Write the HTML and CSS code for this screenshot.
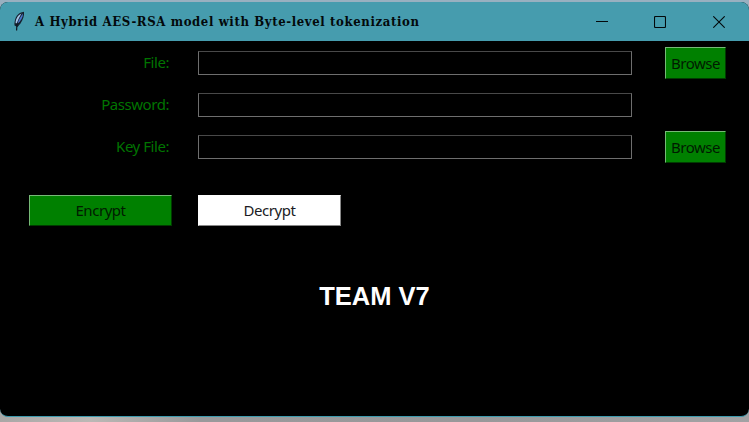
FILE: index.html
```html
<!DOCTYPE html>
<html lang="en">
<head>
<meta charset="utf-8">
<title>A Hybrid AES-RSA model with Byte-level tokenization</title>
<link rel="stylesheet" href="styles.css">
</head>
<body>
<main class="window">
  <header class="titlebar">
    <svg class="feather" width="14" height="22" viewBox="0 0 14 22">
      <path d="M1.500 14.500C1 9 3.500 3 8 1.500L11 .8C11.500 4 10 9 7.500 12.500L4.500 16Z" fill="#15202e"/>
      <path d="M2.600 12C2.600 8 5 4 8.500 2.500C6.500 6 5 9 3.500 13Z" fill="#a3c3e6"/>
      <path d="M4.500 12.800C5.500 8.500 8 5 10 2.500C9.900 6.500 8 10 4.500 12.800Z" fill="#4a76cc"/>
      <path d="M4 12L3.600 19.500" fill="none" stroke="#0b1520" stroke-width="1.200"/>
    </svg>
    <h1 class="title">A Hybrid AES-RSA model with Byte-level tokenization</h1>
    <nav class="controls">
      <svg width="12" height="12" viewBox="0 0 12 12"><path d="M0 5.500H12"/></svg>
      <svg width="12" height="12" viewBox="0 0 12 12"><rect x=".5" y=".5" width="11" height="11" rx="1"/></svg>
      <svg class="close" width="12" height="12" viewBox="0 0 12 12"><path d="M.3.300L11.700 11.700M11.700.300L.3 11.700"/></svg>
    </nav>
  </header>
  <form class="form">
    <label class="label" for="file">File:</label>
    <input class="entry" id="file" type="text">
    <button class="button" type="button">Browse</button>
    <label class="label" for="password">Password:</label>
    <input class="entry" id="password" type="text">
    <span></span>
    <label class="label" for="key">Key File:</label>
    <input class="entry" id="key" type="text">
    <button class="button" type="button">Browse</button>
  </form>
  <div class="actions">
    <button class="button" type="button">Encrypt</button>
    <button class="button light" type="button">Decrypt</button>
  </div>
  <p class="team">TEAM V7</p>
</main>
</body>
</html>
```
FILE: styles.css
```css
* {
  box-sizing: border-box;
}

body {
  margin: 0;
  height: 422px;
  padding-top: 2px;
  overflow: hidden;
  background: linear-gradient(#98b0c0 0 20px, transparent 20px),
    linear-gradient(90deg, #a9a7a6, #bbb8b5 90px, #99999b 200px, #98989a 480px, #a2a2a4);
}

.window {
  height: 415px;
  background: #000;
  border-bottom: 1px solid #3d9bae;
  border-radius: 8px;
  overflow: hidden;
}

.titlebar {
  display: flex;
  align-items: center;
  height: 39px;
  padding: 0 24px 0 13px;
  background: #469cae;
}

.feather {
  margin-right: 8px;
}

.title {
  margin: 0;
  font: bold 13px/20px "DejaVu Serif Condensed", "DejaVu Serif", serif;
  font-stretch: condensed;
  letter-spacing: 0.620px;
  white-space: nowrap;
  color: #03090b;
}

.controls {
  display: flex;
  gap: 46px;
  margin-left: auto;
}

.controls svg {
  fill: none;
  stroke: #03090b;
  stroke-width: 1.100;
}

.controls .close {
  margin-left: 1px;
}

.form {
  display: grid;
  grid-template-columns: 169px 434px 61px;
  grid-template-rows: 32px 32px 32px;
  column-gap: 29px;
  row-gap: 10px;
  align-items: center;
  padding-top: 6px;
}

.form .button {
  margin-left: 4px;
}

.label,
.button {
  font: 15px/20px "Noto Sans", sans-serif;
  letter-spacing: -0.450px;
}

.label {
  padding-bottom: 2px;
  text-align: right;
  color: #007400;
}

.entry {
  width: 434px;
  height: 24px;
  padding: 0 4px;
  color: #008000;
  background: #000;
  border: 1px solid #6e6e6e;
  border-top-color: #494949;
  outline: none;
}

.button {
  width: 61px;
  height: 32px;
  padding: 0 0 1px;
  color: #001b00;
  background: #008000;
  border: 1px solid #003c00;
  border-top-color: #77b977;
  border-left-color: #77b977;
}

.actions {
  display: flex;
  gap: 26px;
  padding: 32px 0 0 29px;
}

.actions .button {
  width: 143px;
  height: 31px;
}

.actions .light {
  color: #1b1b24;
  background: #fff;
  border-color: #fff #888 #888 #fff;
}

.team {
  margin: 55px 0 0;
  text-align: center;
  font: bold 25.500px/30px "Liberation Sans", Arial, sans-serif;
  color: #fff;
}
```
